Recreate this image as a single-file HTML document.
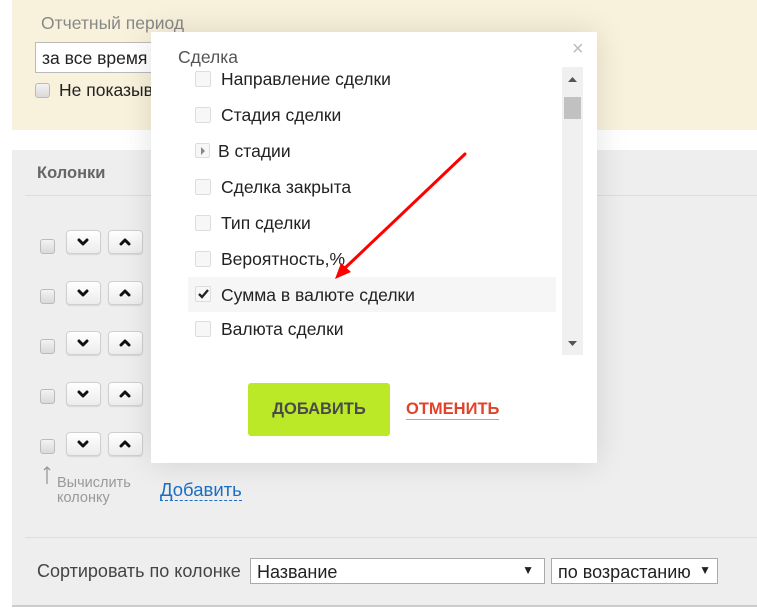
<!DOCTYPE html>
<html><head><meta charset="utf-8"><style>
*{margin:0;padding:0;box-sizing:border-box}
body{width:757px;height:614px;background:#fff;position:relative;overflow:hidden;font-family:"Liberation Sans",Arial,sans-serif;color:#222}
.abs{position:absolute}
.beige{left:12px;top:0;width:745px;height:130px;background:#f8f2dc}
.gray{left:12px;top:150px;width:745px;height:455px;background:#eeeeee}
.cb{position:absolute;width:15px;height:15px;border:1px solid #bbb;border-radius:3px;background:linear-gradient(#f3f3f3,#d9d9d9)}
.btn{position:absolute;width:35px;height:24px;border:1px solid #d0d0d0;border-radius:4px;background:linear-gradient(#fff,#ececec);box-shadow:0 1px 1px rgba(0,0,0,.1)}
.pcb{position:absolute;left:44px;width:16px;height:16px;border:1px solid #ddd;border-radius:2px;background:#f7f7f7}
.item{position:absolute;left:70px;font-size:17.5px;color:#222}
</style></head><body>
<div class="abs beige"></div>
<div class="abs" style="left:41px;top:13px;font-size:17.5px;color:#888">Отчетный период</div>
<div class="abs" style="left:35px;top:42px;width:130px;height:31px;border:1px solid #bbb;background:#fff;font-size:17.5px;padding:5px 6px;overflow:hidden;white-space:nowrap">за все время</div>
<div class="cb" style="left:35px;top:83px"></div>
<div class="abs" style="left:59px;top:80px;font-size:17.5px">Не показывать</div>

<div class="abs gray"></div>
<div class="abs" style="left:37px;top:164px;font-size:16.5px;font-weight:bold;color:#666">Колонки</div>
<div class="abs" style="left:25px;top:195px;width:732px;height:1px;background:#ddd"></div>

<div class="cb" style="left:40px;top:239px"></div><div class="btn" style="left:66px;top:230px"></div><div class="btn" style="left:108px;top:230px"></div>
<div class="cb" style="left:40px;top:289px"></div><div class="btn" style="left:66px;top:281px"></div><div class="btn" style="left:108px;top:281px"></div>
<div class="cb" style="left:40px;top:339px"></div><div class="btn" style="left:66px;top:331px"></div><div class="btn" style="left:108px;top:331px"></div>
<div class="cb" style="left:40px;top:389px"></div><div class="btn" style="left:66px;top:382px"></div><div class="btn" style="left:108px;top:382px"></div>
<div class="cb" style="left:40px;top:439px"></div><div class="btn" style="left:66px;top:432px"></div><div class="btn" style="left:108px;top:432px"></div>
<svg class="abs" style="left:0;top:0" width="160" height="460">
<g fill="none" stroke="#111" stroke-width="3" stroke-linecap="round" stroke-linejoin="round">
<path d="M79 240l4 4 4-4M121 244l4-4 4 4"/>
<path d="M79 291l4 4 4-4M121 295l4-4 4 4"/>
<path d="M79 341l4 4 4-4M121 345l4-4 4 4"/>
<path d="M79 392l4 4 4-4M121 396l4-4 4 4"/>
<path d="M79 442l4 4 4-4M121 446l4-4 4 4"/>
</g></svg>
<svg class="abs" style="left:43px;top:465px" width="8" height="20"><path d="M4 19V2M1 5l3-3 3 3" stroke="#999" stroke-width="1.3" fill="none"/></svg>
<div class="abs" style="left:57px;top:476px;font-size:14.5px;color:#999;line-height:15px">Вычислить<br>колонку</div>
<div class="abs" style="left:160px;top:480px;font-size:18.5px;color:#1a6fc4;border-bottom:1px dashed #1a6fc4;line-height:20px">Добавить</div>

<div class="abs" style="left:25px;top:537px;width:732px;height:1px;background:#ddd"></div>
<div class="abs" style="left:37px;top:561px;font-size:18px;color:#444">Сортировать по колонке</div>
<div class="abs" style="left:250px;top:558px;width:295px;height:26px;border:1px solid #aaa;background:#fff;font-size:18px;padding:3px 6px">Название<span style="position:absolute;right:10px;top:4px;font-size:12px">▼</span></div>
<div class="abs" style="left:551px;top:558px;width:167px;height:26px;border:1px solid #aaa;background:#fff;font-size:18px;padding:3px 6px">по возрастанию<span style="position:absolute;right:6px;top:4px;font-size:12px">▼</span></div>
<div class="abs" style="left:12px;top:605px;width:745px;height:2px;background:#ccc"></div>

<div class="abs" style="left:151px;top:32px;width:446px;height:431px;background:#fff;box-shadow:0 0 30px rgba(0,0,0,.12)">
<div class="abs" style="left:27px;top:15px;font-size:17.5px;color:#555">Сделка</div>
<div class="abs" style="left:421px;top:6px;font-size:20px;color:#bbb">×</div>
<div class="abs" style="left:37px;top:245px;width:368px;height:35px;background:#f6f6f6"></div>
<div class="pcb" style="top:39px"></div><div class="item" style="top:37px">Направление сделки</div>
<div class="pcb" style="top:75px"></div><div class="item" style="top:73px">Стадия сделки</div>
<div class="pcb" style="top:111px;width:15px;height:15px"></div><svg class="abs" style="left:49px;top:115px" width="6" height="8"><path d="M1 0l4 4-4 4z" fill="#888"/></svg><div class="item" style="top:109px;left:67px">В стадии</div>
<div class="pcb" style="top:147px"></div><div class="item" style="top:145px">Сделка закрыта</div>
<div class="pcb" style="top:183px"></div><div class="item" style="top:181px">Тип сделки</div>
<div class="pcb" style="top:219px"></div><div class="item" style="top:217px">Вероятность,%</div>
<div class="pcb" style="top:254px"></div><svg class="abs" style="left:46px;top:256px" width="14" height="12"><path d="M2 6l3 3 6-7" stroke="#222" stroke-width="2.3" fill="none"/></svg><div class="item" style="top:253px">Сумма в валюте сделки</div>
<div class="pcb" style="top:289px"></div><div class="item" style="top:287px">Валюта сделки</div>
<div class="abs" style="left:411px;top:35px;width:21px;height:288px;background:#f0f0f0"></div>
<div class="abs" style="left:413px;top:65px;width:17px;height:22px;background:#c1c1c1"></div>
<svg class="abs" style="left:411px;top:35px" width="21" height="288"><path d="M6 15h9l-4.5-5z M6 274h9l-4.5 5z" fill="#555"/></svg>
<div class="abs" style="left:97px;top:351px;width:142px;height:53px;background:#bce927;border-radius:3px;font-size:16.5px;font-weight:bold;color:#4a4a4a;text-align:center;line-height:53px">ДОБАВИТЬ</div>
<div class="abs" style="left:255px;top:368px;font-size:16.5px;font-weight:bold;color:#e0432a;border-bottom:1px solid #e8907f;line-height:19px">ОТМЕНИТЬ</div>
</div>
<svg class="abs" style="left:0;top:0" width="757" height="614"><path d="M465 154L345 268" stroke="#f00" stroke-width="3" stroke-linecap="round"/><path d="M335 279l6-16 10 9z" fill="#f00"/></svg>
</body></html>
